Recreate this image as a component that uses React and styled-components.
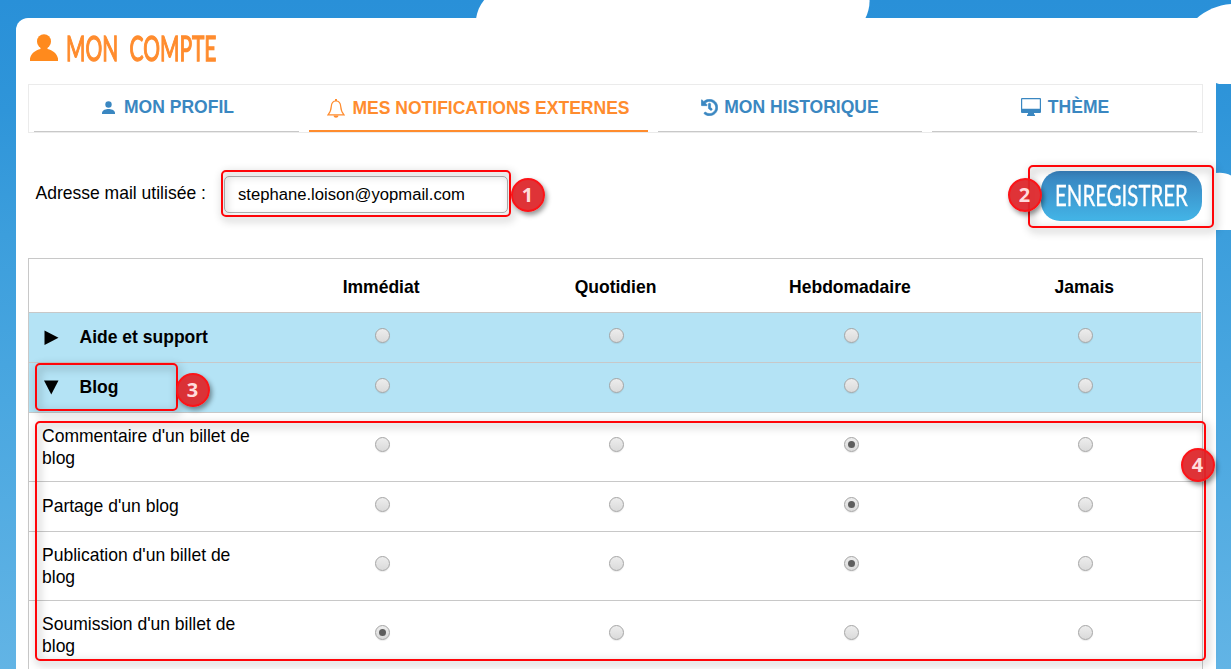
import React from "react";
import styled, { createGlobalStyle, css } from "styled-components";
import { FaHistory } from "react-icons/fa";

const GlobalStyle = createGlobalStyle`
  html, body { margin: 0; padding: 0; }
  body { overflow: hidden; font-family: "Liberation Sans", Arial, sans-serif; font-size: 17.53px; color: #000; }
  *, *::before, *::after { box-sizing: border-box; }
`;

const Page = styled.div`
  position: relative;
  width: 1231px;
  height: 669px;
  overflow: hidden;
  padding: 18px 15px 0 16px;
  background: linear-gradient(#2990d8 0, #2f95d9 110px, #3c9edc 235px, #4aa7e0 400px, #62b4e5 669px);
`;

const Sky = styled.svg`
  position: absolute;
  inset: 0;
  width: 1231px;
  height: 669px;
`;

const Panel = styled.main`
  position: relative;
  width: 1200px;
  height: 660px;
  padding: 0 13px 0 12px;
  background: #fff;
  border-radius: 12px 0 0 0;
`;

const Title = styled.h1`
  display: flex;
  align-items: flex-start;
  gap: 8px;
  height: 66px;
  margin: 0;
  padding: 16px 0 0 2px;
  color: #ff8a1d;
  font-weight: 400;
`;

const Condensed = styled.span`
  display: block;
  flex: none;
  white-space: nowrap;
  transform-origin: 0 0;
  font-family: Lato, "Open Sans", sans-serif;
`;

const TitleText = styled(Condensed)`
  font-size: 34px;
  line-height: 34px;
  height: 34px;
  margin-top: -3px;
  color: #ff8c2e;
  word-spacing: 10px;
  -webkit-text-stroke: 1.3px #ff8c2e;
  transform: scaleX(0.615);
`;

const Tabs = styled.nav`
  display: flex;
  gap: 10px;
  height: 49px;
  padding: 0 5px;
  border: 1px solid #ebebeb;
`;

const Tab = styled.a`
  display: flex;
  align-items: center;
  justify-content: center;
  gap: ${(p) => p.$gap}px;
  width: ${(p) => p.$width}px;
  height: 47px;
  padding: 0 0 2px ${(p) => p.$indent || 0}px;
  border-bottom: ${(p) => (p.$active ? "2px solid #ff8c2e" : "1px solid #c8c8c8")};
  color: ${(p) => (p.$active ? "#ff8c2e" : "#3a87c1")};
  font-weight: 700;
  line-height: 20px;
  white-space: nowrap;
  ${(p) => p.$active && css`padding: 1px 0 0;`}
  svg { flex: none; }
`;

const Form = styled.div`
  display: flex;
  align-items: flex-start;
  height: 125px;
  padding: 38px 0 0 7.5px;
`;

const Label = styled.label`
  width: 188.5px;
  padding-top: 12px;
  line-height: 20px;
`;

const Input = styled.input`
  width: 284px;
  height: 37px;
  margin: 5px 0 0;
  padding: 0 13px;
  border: 1px solid #b3b3b3;
  border-radius: 5px;
  outline: none;
  background: #fff;
  color: #000;
  font: 16.65px "Liberation Sans", Arial, sans-serif;
`;

const SaveButton = styled.button`
  width: 161px;
  height: 50px;
  margin: 0 1px 0 auto;
  padding: 0 0 2px 14px;
  border: 0;
  border-radius: 19px;
  background: linear-gradient(#3881bd, #43b5e7);
  color: #fff;
`;

const SaveText = styled(Condensed)`
  font-size: 28.5px;
  line-height: 34px;
  text-align: left;
  -webkit-text-stroke: 0.3px #fff;
  transform: scaleX(0.717);
`;

const Table = styled.div`
  height: 430px;
  border: 1px solid #c8c8c8;
  padding-right: 1px;
`;

const Row = styled.div`
  display: grid;
  grid-template-columns: repeat(5, 1fr);
  align-items: center;
  height: ${(p) => p.$height}px;
  border-bottom: 1px solid #c8c8c8;
  ${(p) => p.$group && css`background: #b4e3f5; font-weight: 700;`}
`;

const HeadCell = styled.div`
  padding: 3px 0 0 1px;
  text-align: center;
  font-weight: 700;
`;

const GroupName = styled.div`
  display: flex;
  align-items: center;
  gap: 21px;
  padding-left: 14.5px;
  line-height: 20px;
`;

const GroupLabel = styled.span`
  margin-top: -2px;
`;

const ItemName = styled.div`
  padding: 0 8px ${(p) => (p.$single ? 2 : 0)}px 13px;
  line-height: 22px;
`;

const RadioCell = styled.div`
  display: flex;
  justify-content: center;
  padding: 0 0 ${(p) => p.$lift}px 3.7px;
`;

const Radio = styled.span`
  display: flex;
  align-items: center;
  justify-content: center;
  width: 15px;
  height: 15px;
  border: 1px solid #a5a5a5;
  border-radius: 50%;
  background: linear-gradient(#ededed, #dadada);
  box-shadow: 0 1px 1px rgba(0, 0, 0, 0.08);
  ${(p) => p.$checked && css`&::after {
    content: "";
    width: 7px;
    height: 7px;
    border-radius: 50%;
    background: #5e5e5e;
  }`}
`;

const Frame = styled.div`
  position: absolute;
  left: ${(p) => p.$x}px;
  top: ${(p) => p.$y}px;
  width: ${(p) => p.$w}px;
  height: ${(p) => p.$h}px;
  border: 2px solid #ff0509;
  border-radius: 5px;
  filter: drop-shadow(2px 3px 4px rgba(0, 0, 0, 0.45));
  pointer-events: none;
`;

const Badge = styled.div`
  position: absolute;
  left: ${(p) => p.$x - 16.5}px;
  top: ${(p) => p.$y - 17}px;
  width: 34px;
  height: 34px;
  border: 2px solid #fb1418;
  border-radius: 50%;
  background: rgba(221, 38, 43, 0.94);
  box-shadow: 2px 3px 5px rgba(0, 0, 0, 0.42);
  color: #ffdcdc;
  font: 700 20px/29px "Open Sans", sans-serif;
  text-align: center;
`;

const Person = ({ width, height }) => (
  <svg width={width} height={height} viewBox="0 0 28 27" preserveAspectRatio="none" fill="currentColor">
    <ellipse cx="14" cy="7.5" rx="7" ry="7.3" />
    <path d="M10.500 12h7v3c5 1 9.500 4.500 10.500 9.500V27H0v-2.500C1 19.500 5.500 16 10.500 15z" />
  </svg>
);

const SmallPerson = () => (
  <svg width="13" height="13" viewBox="0 0 13 13" fill="currentColor">
    <circle cx="6.500" cy="3.500" r="3.200" />
    <path d="M0 13v-1.500C0.500 9 4 8 6.500 8s6 1 6.500 3.500V13z" />
  </svg>
);

const Bell = () => (
  <svg width="18" height="19" viewBox="0 0 18 19" fill="none" stroke="currentColor" strokeWidth="1.200">
    <path d="M9 2C5.700 2 4.500 4.600 4.300 7.400C4.100 11 3.600 13 1 15.800H17C14.400 13 13.900 11 13.700 7.400C13.500 4.600 12.300 2 9 2Z" />
    <path d="M9 0v2" strokeWidth="2" />
    <path d="M6.500 16.500h5c-.3 3-4.700 3-5 0z" fill="currentColor" stroke="none" />
  </svg>
);

const Monitor = () => (
  <svg width="20" height="18" viewBox="0 0 20 18" fill="currentColor">
    <path fillRule="evenodd" d="M1 0h18a1 1 0 0 1 1 1v13a1 1 0 0 1-1 1h-6v1.500h1V18H6v-1.500h1V15H1a1 1 0 0 1-1-1V1a1 1 0 0 1 1-1zM1.200 1.200v9.600h17.600V1.200z" />
  </svg>
);

const Arrow = ({ open }) => (
  <svg width="15" height="15" viewBox="0 0 15 15">
    <path d={open ? "M0 0.500H14.500L7.250 14.500Z" : "M0.500 0.500V15L14.500 7.750Z"} />
  </svg>
);

const periods = ["Immédiat", "Quotidien", "Hebdomadaire", "Jamais"];

const rows = [
  { name: "Aide et support", group: true, height: 50 },
  { name: "Blog", group: true, open: true, height: 50 },
  { name: "Commentaire d'un billet de blog", height: 69, checked: 2 },
  { name: "Partage d'un blog", height: 50, checked: 2 },
  { name: "Publication d'un billet de blog", height: 69, checked: 2 },
  { name: "Soumission d'un billet de blog", height: 69, checked: 0 },
];

export default function App() {
  return (
    <Page>
      <GlobalStyle />
      <Sky viewBox="0 0 1231 669" fill="#fff">
        <path d="M476 19C477 11 480 5 485 -1H869.500C870 6 868 13 865 19Z" />
        <path d="M1196 19C1206 10 1218 5 1232 4V84H1219L1210 81Z" />
        <path d="M1210 174C1218 172 1226 172 1232 176V230H1210Z" />
      </Sky>
      <Panel>
        <Title>
          <Person width={28} height={27} />
          <TitleText>MON COMPTE</TitleText>
        </Title>
        <Tabs>
          <Tab $width={265} $gap={9} $indent={3}><SmallPerson />MON PROFIL</Tab>
          <Tab $width={339} $gap={7} $active><Bell />MES NOTIFICATIONS EXTERNES</Tab>
          <Tab $width={264} $gap={6}><FaHistory size={17} stroke="currentColor" strokeWidth={18} />MON HISTORIQUE</Tab>
          <Tab $width={265} $gap={7} $indent={1}><Monitor />THÈME</Tab>
        </Tabs>
        <Form>
          <Label htmlFor="mail">Adresse mail utilisée :</Label>
          <Input id="mail" defaultValue="stephane.loison@yopmail.com" />
          <SaveButton><SaveText>ENREGISTRER</SaveText></SaveButton>
        </Form>
        <Table>
          <Row $height={54}>
            <span />
            {periods.map((p) => <HeadCell key={p}>{p}</HeadCell>)}
          </Row>
          {rows.map((r) => (
            <Row key={r.name} $height={r.height} $group={r.group}>
              {r.group
                ? <GroupName><Arrow open={r.open} /><GroupLabel>{r.name}</GroupLabel></GroupName>
                : <ItemName $single={r.height === 50}>{r.name}</ItemName>}
              {periods.map((p, i) => (
                <RadioCell key={p} $lift={r.height > 50 ? 5 : 4}>
                  <Radio role="radio" aria-checked={r.checked === i} $checked={r.checked === i} />
                </RadioCell>
              ))}
            </Row>
          ))}
        </Table>
      </Panel>
      <Frame $x={221} $y={170} $w={290} $h={47} />
      <Frame $x={1028} $y={164.5} $w={186} $h={63} />
      <Frame $x={35} $y={363} $w={143} $h={48} />
      <Frame $x={35} $y={421} $w={1171} $h={240} />
      <Badge $x={527} $y={195}>1</Badge>
      <Badge $x={1024} $y={195}>2</Badge>
      <Badge $x={192} $y={390}>3</Badge>
      <Badge $x={1197} $y={465}>4</Badge>
    </Page>
  );
}
